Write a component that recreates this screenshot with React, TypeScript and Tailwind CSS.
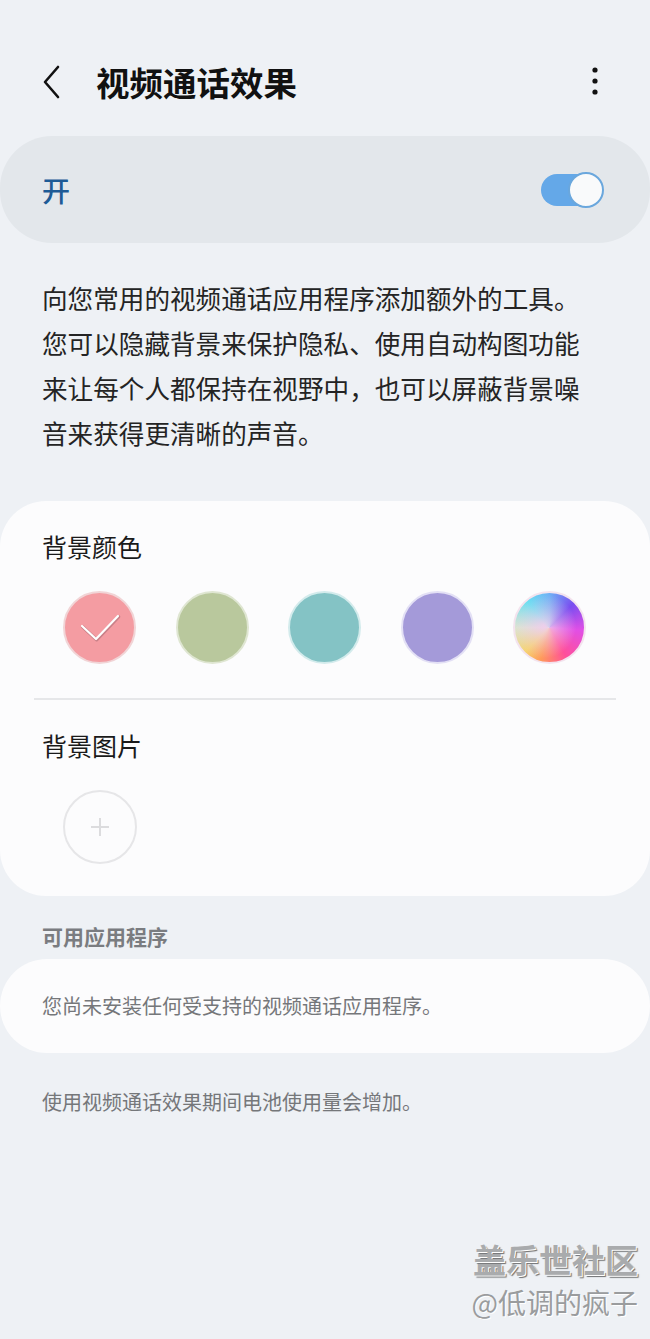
const colors = [
  { name: "pink", cls: "bg-[#f49ca2] border-[#f1d4d6]", checked: true },
  { name: "green", cls: "bg-[#b9c89d] border-[#dfe6d2]" },
  { name: "teal", cls: "bg-[#84c3c5] border-[#d3ebec]" },
  { name: "purple", cls: "bg-[#a49ad9] border-[#e3e0f5]" },
];

function BackIcon() {
  return (
    <svg width="24" height="36" viewBox="0 0 24 36" fill="none">
      <path d="M18 3 L5 18 L18 33" stroke="#111" strokeWidth="2.6" strokeLinecap="round" strokeLinejoin="round" />
    </svg>
  );
}

function MoreIcon() {
  return (
    <svg width="10" height="32" viewBox="0 0 10 32" fill="#111">
      <circle cx="5" cy="4" r="2.6" />
      <circle cx="5" cy="15" r="2.6" />
      <circle cx="5" cy="26" r="2.6" />
    </svg>
  );
}

function Check() {
  return (
    <svg width="44" height="34" viewBox="0 0 44 34" fill="none">
      <path d="M4 15 L18 28 L40 5" stroke="#c98088" strokeWidth="3.4" strokeLinecap="round" strokeLinejoin="round" transform="translate(0.6 0.8)" />
      <path d="M4 15 L18 28 L40 5" stroke="#ffffff" strokeWidth="2.2" strokeLinecap="round" strokeLinejoin="round" />
    </svg>
  );
}

export default function App() {
  return (
    <div className="relative min-h-[1339px] w-[650px] bg-[#eef1f5] font-['Noto_Sans_CJK_SC','Noto_Sans',sans-serif] overflow-hidden">
      {/* header */}
      <div className="flex items-center h-[70px] mt-[47px] pl-[40px] pr-[50px]">
        <BackIcon />
        <h1 className="ml-[32px] text-[33.5px] font-bold text-[#111] leading-none">视频通话效果</h1>
        <div className="ml-auto">
          <MoreIcon />
        </div>
      </div>

      {/* master switch */}
      <div className="mt-[19px] h-[107px] rounded-[52px] bg-[#e3e7eb] flex items-center pl-[42px] pr-[46px]">
        <span className="text-[28px] font-medium text-[#1e5b96] leading-none">开</span>
        <div className="ml-auto relative w-[63px] h-[36px] flex items-center">
          <div className="w-[56px] h-[32px] rounded-full bg-[#64a8e8]" />
          <div className="absolute right-0 top-0 w-[36px] h-[36px] rounded-full bg-[#f9fafb] border-[2px] border-[#6aa7dd]" />
        </div>
      </div>

      {/* description */}
      <p className="mt-[32px] pl-[42px] pr-[52px] text-[25.6px] leading-[45px] text-[#242424]">
        向您常用的视频通话应用程序添加额外的工具。您可以隐藏背景来保护隐私、使用自动构图功能来让每个人都保持在视野中，也可以屏蔽背景噪音来获得更清晰的声音。
      </p>

      {/* background card */}
      <div className="mt-[46px] rounded-[46px] bg-[#fcfcfd] pt-[30px] pb-[32px]">
        <div className="px-[42px] text-[25px] leading-[30px] text-[#1a1a1a]">背景颜色</div>
        <div className="mt-[30px] flex items-center gap-[39.5px] pl-[63px]">
          {colors.map((c) => (
            <div key={c.name} className={`w-[73px] h-[73px] rounded-full border-[2px] flex items-center justify-center ${c.cls}`}>
              {c.checked && <Check />}
            </div>
          ))}
          <div className="w-[73px] h-[73px] rounded-full border-[2px] border-[#f3e3ee] bg-[radial-gradient(circle_at_42%_48%,rgba(240,205,235,0.95)_0%,rgba(240,205,235,0.45)_30%,transparent_60%),conic-gradient(from_0deg,#6fb0f5,#7a4ef0_45deg,#e14fe6_95deg,#ff4f9a_150deg,#ff9a5a_195deg,#f6d36e_225deg,#d9e6d0_270deg,#5fe0f2_320deg,#6fb0f5)]" />
        </div>
        <div className="mt-[34px] mx-[34px] h-[2px] bg-[#e6e7e9]" />
        <div className="mt-[30px] px-[42px] text-[25px] leading-[30px] text-[#1a1a1a]">背景图片</div>
        <div className="mt-[30px] ml-[63px] w-[74px] h-[74px] rounded-full border-[2px] border-[#e6e6e8] flex items-center justify-center">
          <svg width="20" height="20" viewBox="0 0 20 20">
            <path d="M10 1 V19 M1 10 H19" stroke="#dcdcde" strokeWidth="2" />
          </svg>
        </div>
      </div>

      {/* available apps */}
      <div className="mt-[27px] px-[42px] text-[21px] leading-[26px] font-bold text-[#7a7c80]">可用应用程序</div>
      <div className="mt-[10px] h-[94px] rounded-full bg-[#fcfcfd] flex items-center px-[42px]">
        <span className="text-[20px] text-[#75777a]">您尚未安装任何受支持的视频通话应用程序。</span>
      </div>

      <p className="mt-[36px] px-[42px] text-[20px] leading-[26px] text-[#75777a]">使用视频通话效果期间电池使用量会增加。</p>

      {/* watermark */}
      <div className="absolute right-[12px] top-[1238px] flex flex-col items-end">
        <span className="text-[33px] font-bold leading-[42px] text-[#a9abad] [text-shadow:1px_1px_0_#ffffff,2px_2px_1px_#6d6e70]">盖乐世社区</span>
        <span className="mt-[4px] text-[28px] leading-[36px] text-[#9a9c9e] [text-shadow:1px_1px_0_#ffffff]">@低调的疯子</span>
      </div>
    </div>
  );
}
